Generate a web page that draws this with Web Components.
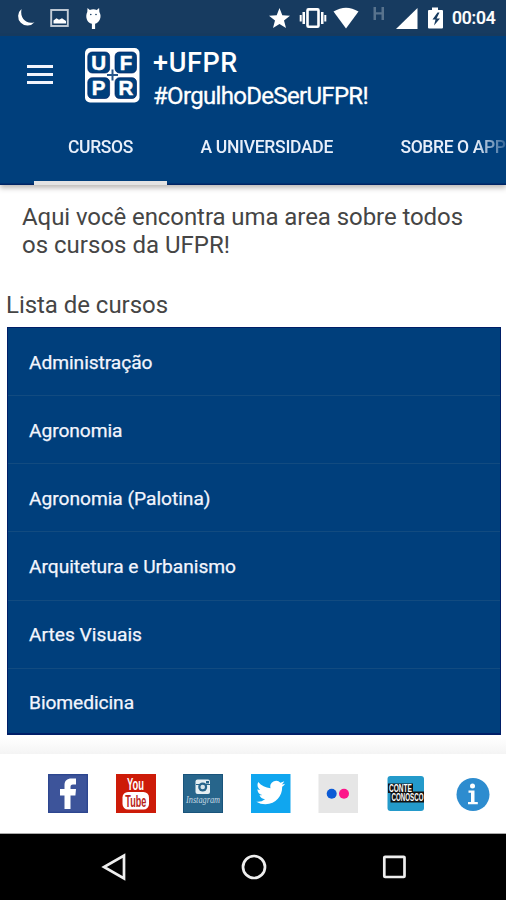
<!DOCTYPE html>
<html lang="pt-BR">
<head>
<meta charset="utf-8">
<title>+UFPR</title>
<style>
html,body{margin:0;padding:0;background:#fff;font-family:Roboto,"Liberation Sans",sans-serif}
body{width:506px;height:900px;overflow:hidden}
</style>
</head>
<body>
<ufpr-app></ufpr-app>
<script>
const define = (name, html, setup) => customElements.define(name, class extends HTMLElement {
  connectedCallback() {
    if (this.shadowRoot) return;
    const t = document.createElement('template');
    t.innerHTML = html;
    this.attachShadow({mode: 'open'}).append(t.content.cloneNode(true));
    if (setup) setup(this, this.shadowRoot);
  }
});

// One line of text whose letter spacing is tuned to fill the given width.
define('fit-text', `<style>:host{display:block;white-space:nowrap}span{display:inline-block}</style><span><slot></slot></span>`, (host, root) => {
  const s = root.querySelector('span'), w = parseFloat(host.getAttribute('w'));
  const n = host.textContent.length;
  if (w) s.style.letterSpacing = ((w - s.getBoundingClientRect().width) / n) + 'px';
});

define('status-bar', `<style>
:host{display:flex;height:36px;background:#173b60;color:#fff}
svg{flex:none;display:block}
.time{margin:8px 0 0 2px;font:500 17.5px/21px Roboto,sans-serif;-webkit-text-stroke:.2px #fff}
</style>
<svg width="450" height="36" viewBox="0 0 450 36" fill="#fff">
<path d="M21.500 9A9.300 9.300 0 1 0 34.500 22.200C27 24.500 19.500 19 21.500 9Z"/>
<rect x="51.2" y="10" width="16.6" height="16" fill="none" stroke="#c5ced8" stroke-width="1.9"/>
<path d="M53.5 23.5v-3l3-2.200 2.500 1.500 3-1.500 4 2.700v2.500Z"/>
<path d="M87.500 8l2.300 2a8 8 0 0 1 7 0l2.300-2 .3 4c3 5-.3 11-4.300 11.800V29h-3.200v-5.200c-5-1-7-7-4.600-11.800Z"/>
<circle cx="90.8" cy="14.500" r=".8" fill="#173b60"/><circle cx="96" cy="14.500" r=".8" fill="#173b60"/>
<path d="M279.500 8l2.800 7.200 7.700.5-6 4.900 2 7.400-6.500-4.100-6.500 4.100 2-7.400-6-4.900 7.700-.5Z"/>
<rect x="307.500" y="9.400" width="11" height="17.400" rx="1" fill="none" stroke="#fff" stroke-width="2.600"/>
<path d="M302.500 12h2.500v12h-2.500zM299.700 15h2v6.500h-2zM321 12h2.500v12h-2.500zM324.300 15h2v6.500h-2z"/>
<path d="M333.500 11.600Q346 4 358.500 11.600L346 28.500Z"/>
<path d="M373.500 7h2.500v5.200h5.500V7h2.500v13h-2.500v-5.500h-5.500V20h-2.500z" fill="#58738d"/>
<path d="M417.500 8v21h-21.500Z"/>
<path d="M432 7.500h6v2.500h4q1 0 1 1v16.500q0 1-1 1h-13q-1 0-1-1V11q0-1 1-1h3Z"/>
<path d="M437.500 12.500l-5 7h3l-1.500 6 6-7h-3.500l3-6Z" fill="#173b60"/>
</svg><fit-text class="time" w="43.500">00:04</fit-text>`);

define('ufpr-logo', `<style>:host{display:block;width:56px;height:55px}svg{display:block;overflow:visible}text{font:bold 20.500px "Liberation Sans",Arial,sans-serif;fill:#fff;stroke:#fff;stroke-width:.5px;text-anchor:middle}</style>
<svg width="56" height="55" viewBox="0 0 56 55">
<rect x="1" width="54.500" height="54.500" rx="5" fill="#fff"/>
<g fill="#003f7c" stroke="#002468" stroke-width=".7"><rect x="3.800" y="4" width="21.800" height="21" rx="4.500"/><rect x="31" y="4" width="21.500" height="21" rx="4.500"/><rect x="3.800" y="29.700" width="21.800" height="20.800" rx="4.500"/><rect x="31" y="29.700" width="21.500" height="20.800" rx="4.500"/></g>
<path d="M28.500 21.500v11M23 27h11" stroke="#27558a" stroke-width="2"/>
<text x="14.700" y="21.500">U</text><text x="42" y="21.500">F</text><text x="14.700" y="47.300">P</text><text x="42" y="47.300">R</text>
</svg>`);

define('app-bar', `<style>
:host{display:block;height:149px;background:#003f7c;color:#fff;position:relative;z-index:1;box-shadow:0 3px 5px rgba(60,50,40,.34),inset 0 -1.500px 0 #002565}
.top{display:flex;height:80px;padding-left:27px}
.menu{display:flex;flex-direction:column;gap:5px;margin:29px 32px 0 0;width:26px}
.menu i{height:3px;background:#f2f4fc}
ufpr-logo{margin:12px 13px 0 -1px;flex:none}
.t{font:500 27px/32px Roboto,sans-serif;margin-top:11px}
.s{font:400 24px/32px Roboto,sans-serif;margin-top:1px;-webkit-text-stroke:.3px #fff}
nav{display:flex;height:69px;overflow:hidden;font:500 17.500px/22px Roboto,sans-serif;color:#e8effa;
-webkit-mask-image:linear-gradient(90deg,#000 475px,rgba(0,0,0,.2) 506px)}
nav div{box-sizing:border-box;flex:none;padding:20px 34px 0;height:69px}
nav .a{margin-left:34px;border-bottom:4.500px solid #e3e3e3;width:132.500px}
nav .b{width:200px}nav .c{width:180px}
</style>
<div class="top"><div class="menu"><i></i><i></i><i></i></div><ufpr-logo></ufpr-logo>
<div><fit-text class="t" w="85">+UFPR</fit-text><fit-text class="s" w="215">#OrgulhoDeSerUFPR!</fit-text></div></div>
<nav><div class="a"><fit-text w="65">CURSOS</fit-text></div><div class="b"><fit-text w="132.500">A UNIVERSIDADE</fit-text></div><div class="c"><fit-text w="105">SOBRE O APP</fit-text></div></nav>`);

define('course-item', `<style>:host{display:block;box-sizing:border-box;height:68.150px;padding:21.500px 0 0 21.500px;border-bottom:1px solid #124b80;font:400 19.200px/26px Roboto,sans-serif;color:#f3f5fd;-webkit-text-stroke:.25px #f3f5fd}
:host(:last-child){border-bottom:0}</style><slot></slot>`);

define('course-list', `<style>
:host{display:block;margin:8px 5px 0 6.500px;height:408px;box-sizing:border-box;background:#003f7c;border:solid #001f68;border-width:1.500px 1px 2px;overflow:hidden}
</style><course-item><fit-text w="123.500">Administração</fit-text></course-item>
<course-item><fit-text w="93.500">Agronomia</fit-text></course-item>
<course-item><fit-text w="181.500">Agronomia (Palotina)</fit-text></course-item>
<course-item><fit-text w="207">Arquitetura e Urbanismo</fit-text></course-item>
<course-item><fit-text w="113">Artes Visuais</fit-text></course-item>
<course-item><fit-text w="105">Biomedicina</fit-text></course-item>`);

define('course-page', `<style>
:host{display:block;height:569px;box-sizing:border-box;overflow:hidden;background:linear-gradient(#fff 552px,#f4f4f4 569px);color:#454545;font:400 24px/28px Roboto,sans-serif}
.intro{padding:18px 0 0 22px}
h2{margin:32px 0 0;padding-left:6px;font:inherit}
</style><div class="intro"><fit-text w="441">Aqui você encontra uma area sobre todos</fit-text><fit-text w="208">os cursos da UFPR!</fit-text></div>
<h2><fit-text w="162">Lista de cursos</fit-text></h2><course-list></course-list>`);

define('social-bar', `<style>
:host{display:flex;box-sizing:border-box;height:79.500px;padding:20px 0 0 48px;background:#fff;border-bottom:1px solid #aaa}
svg{flex:none;display:block;margin-right:27.500px;overflow:visible}
.yt{font:bold 16px "Liberation Sans",sans-serif}
</style>
<svg width="40" height="39" viewBox="0 0 40 39"><rect width="40" height="39" fill="#3d549a"/><rect x=".75" y=".75" width="38.500" height="37.500" fill="none" stroke="#29428c" stroke-width="1"/><path d="M16.500 35V21.500H12V15h4.500v-3.500C16.500 6.500 19 4.500 23.500 4.500H28v6h-3c-2 0-2.500 1-2.500 2.500V15H28l-.6 6.500h-4.900V35Z" fill="#fff"/></svg>
<svg width="40" height="39" viewBox="0 0 40 39"><rect width="40" height="39" fill="#cd1b08"/><rect x="6.500" y="18" width="26.500" height="17.500" rx="5.500" fill="#fff"/><g text-anchor="middle" class="yt"><text x="19.500" y="16" textLength="17" lengthAdjust="spacingAndGlyphs" fill="#fff">You</text><text x="19.800" y="32.500" textLength="21" lengthAdjust="spacingAndGlyphs" fill="#b92318">Tube</text></g></svg>
<svg width="40" height="39" viewBox="0 0 40 39"><rect width="40" height="39" fill="#27658b"/><rect x=".5" y=".5" width="39" height="38" fill="none" stroke="#19547b"/><rect x="12.500" y="5.500" width="14.500" height="14.500" rx="2" fill="#e5eff3"/><path d="M13 10.500h4M23 10.500h4" stroke="#27658b"/><circle cx="19.700" cy="13" r="4.500" fill="#27658b"/><circle cx="19.700" cy="13" r="2.300" fill="#d8e6ec"/><rect x="23" y="7" width="3" height="2.500" fill="#27658b"/><text x="3" y="28.500" textLength="34" lengthAdjust="spacingAndGlyphs" fill="#c6d9e3" font-family="Liberation Serif,serif" font-style="italic" font-size="10.500">Instagram</text></svg>
<svg width="40" height="39" viewBox="0 0 40 39"><rect width="39.500" height="39" fill="#10a6ef"/><path transform="translate(5.300 4.200) scale(1.200)" fill="#fff" d="M23.950 4.570a10 10 0 0 1-2.820.77 4.960 4.960 0 0 0 2.160-2.720c-.95.55-2 .96-3.130 1.180a4.920 4.920 0 0 0-8.380 4.480C7.690 8.100 4.070 6.130 1.640 3.160a4.900 4.900 0 0 0 1.520 6.570 4.900 4.900 0 0 1-2.230-.61v.06a4.920 4.920 0 0 0 3.950 4.830 5 5 0 0 1-2.210.08 4.940 4.940 0 0 0 4.600 3.420A9.870 9.870 0 0 1 0 19.540a14 14 0 0 0 7.550 2.210c9.050 0 14-7.500 14-13.980 0-.21 0-.42-.02-.63a9.940 9.940 0 0 0 2.460-2.550z"/></svg>
<svg width="40" height="39" viewBox="0 0 40 39"><rect x=".5" width="39.500" height="39" fill="#e6e6e6"/><circle cx="13.700" cy="19.800" r="5" fill="#0c5bd5"/><circle cx="26" cy="19.800" r="5" fill="#fd1489"/></svg>
<svg width="40" height="39" viewBox="0 0 40 39"><rect x="1.500" y="2" width="36.500" height="35" rx="3" fill="#249aca"/><path d="M2 9.500h25v8h11v11H4.500V19H2Z" fill="#111"/><g font-family="Liberation Sans,sans-serif" font-weight="bold" font-size="10.500" fill="#fff"><text x="3" y="18" textLength="23" lengthAdjust="spacingAndGlyphs">CONTE</text><text x="5.500" y="27.300" textLength="32" lengthAdjust="spacingAndGlyphs">CONOSCO</text></g></svg>
<svg width="40" height="39" viewBox="0 0 40 39" style="margin:0"><circle cx="20" cy="20.500" r="16.500" fill="#2d8ccf"/><circle cx="19.500" cy="12" r="2.500" fill="#fff"/><path d="M15.500 16.500h6v11.500h3.300v2.200H15v-2.200h3v-9.300h-2.500Z" fill="#fff"/></svg>`);

define('nav-bar', `<style>:host{display:flex;justify-content:space-between;box-sizing:border-box;height:66.500px;background:#000;padding:17.500px 97.500px 0 98.500px}svg{display:block;flex:none}path,circle,rect{fill:none;stroke:#eee;stroke-width:2.700}</style>
<svg width="30" height="32" viewBox="98 851 30 32"><path d="M123 855.500v23L103 867Z"/></svg>
<svg width="30" height="32" viewBox="238.500 851 30 32"><circle cx="253.500" cy="867" r="11"/></svg>
<svg width="30" height="32" viewBox="379 851 30 32"><rect x="384.300" y="856.800" width="20.200" height="20.200" rx=".8"/></svg>`);

define('ufpr-app', `<style>:host{display:flex;flex-direction:column;width:506px;height:900px;background:#fff}:host>*{flex:none}</style>
<status-bar></status-bar><app-bar></app-bar><course-page></course-page><social-bar></social-bar><nav-bar></nav-bar>`);
</script>
</body>
</html>
